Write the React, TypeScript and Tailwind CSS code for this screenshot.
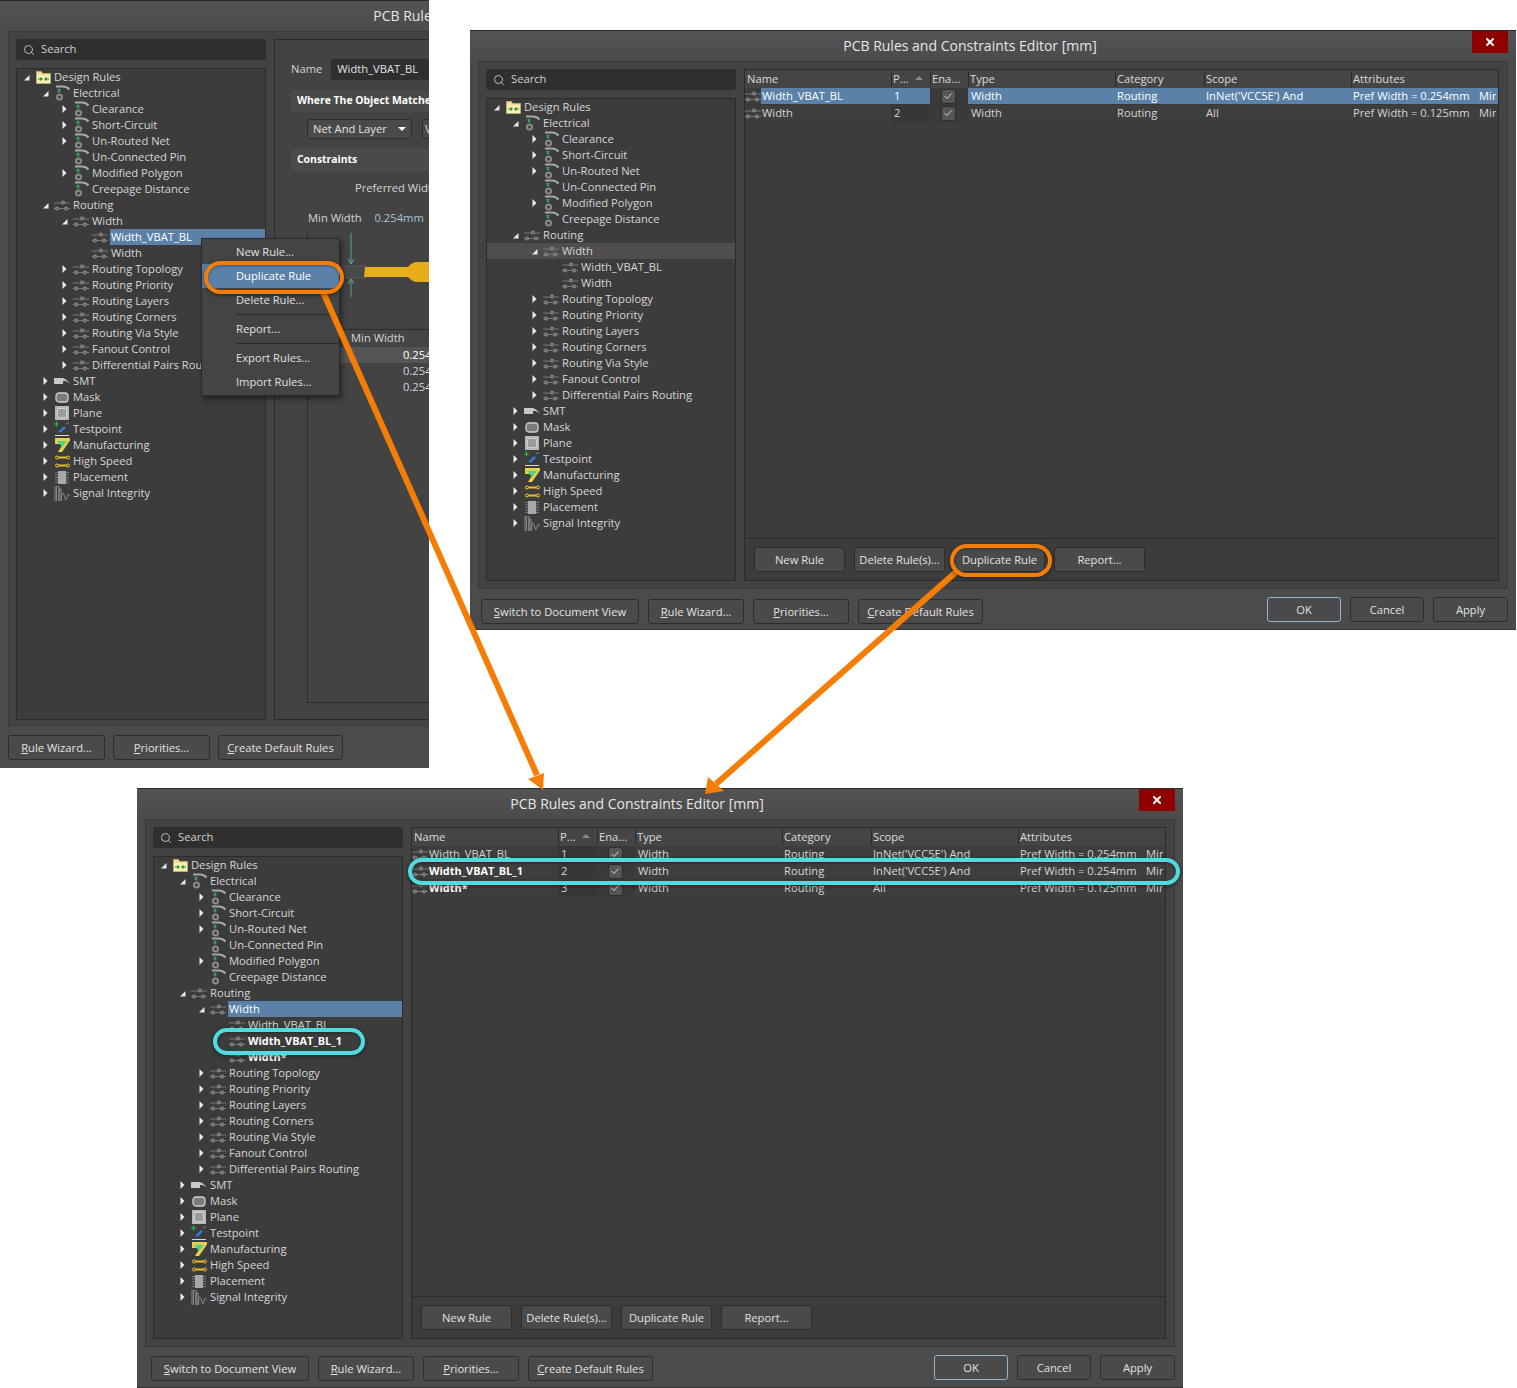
import type { ReactNode } from "react";
import { Search, X } from "lucide-react";

type Kind = "folder" | "elec" | "route" | "smt" | "mask" | "plane" | "test" | "mfg" | "speed" | "place" | "signal";
type Node = { label: string; level: number; kind: Kind; arrow?: "open" | "closed"; selected?: "blue" | "grey"; bold?: boolean };

const TREE_TOP: Node[] = [
  { label: "Design Rules", level: 0, kind: "folder", arrow: "open" },
  { label: "Electrical", level: 1, kind: "elec", arrow: "open" },
  { label: "Clearance", level: 2, kind: "elec", arrow: "closed" },
  { label: "Short-Circuit", level: 2, kind: "elec", arrow: "closed" },
  { label: "Un-Routed Net", level: 2, kind: "elec", arrow: "closed" },
  { label: "Un-Connected Pin", level: 2, kind: "elec" },
  { label: "Modified Polygon", level: 2, kind: "elec", arrow: "closed" },
  { label: "Creepage Distance", level: 2, kind: "elec" },
  { label: "Routing", level: 1, kind: "route", arrow: "open" },
];

const TREE_BOTTOM: Node[] = [
  { label: "Routing Topology", level: 2, kind: "route", arrow: "closed" },
  { label: "Routing Priority", level: 2, kind: "route", arrow: "closed" },
  { label: "Routing Layers", level: 2, kind: "route", arrow: "closed" },
  { label: "Routing Corners", level: 2, kind: "route", arrow: "closed" },
  { label: "Routing Via Style", level: 2, kind: "route", arrow: "closed" },
  { label: "Fanout Control", level: 2, kind: "route", arrow: "closed" },
  { label: "Differential Pairs Routing", level: 2, kind: "route", arrow: "closed" },
  { label: "SMT", level: 1, kind: "smt", arrow: "closed" },
  { label: "Mask", level: 1, kind: "mask", arrow: "closed" },
  { label: "Plane", level: 1, kind: "plane", arrow: "closed" },
  { label: "Testpoint", level: 1, kind: "test", arrow: "closed" },
  { label: "Manufacturing", level: 1, kind: "mfg", arrow: "closed" },
  { label: "High Speed", level: 1, kind: "speed", arrow: "closed" },
  { label: "Placement", level: 1, kind: "place", arrow: "closed" },
  { label: "Signal Integrity", level: 1, kind: "signal", arrow: "closed" },
];

const COLS = "grid grid-cols-[146px_39px_38px_147px_89px_147px_147px]";

function RuleIcon({ kind }: { kind: Kind }) {
  switch (kind) {
    case "folder":
      return (
        <svg width="15" height="13" viewBox="0 0 15 13">
          <path d="M0.500 2.500V0.500h5l1 2h8V12.500H0.500z" fill="#f3df93" stroke="#c9b878" strokeWidth="0.700" />
          <rect x="1" y="4" width="13" height="8" fill="#f9eeb4" />
          <path d="M2 8h4M4.500 6.500 6 8 4.500 9.500M13 8H9M10.500 6.500 9 8l1.500 1.500" stroke="#1f8f2f" strokeWidth="1.200" fill="none" />
        </svg>
      );
    case "elec":
      return (
        <svg width="15" height="16" viewBox="0 0 15 16">
          <path d="M1 1.500H8Q12 1.500 14.500 4.500" stroke="#a8a8a8" strokeWidth="2" fill="none" />
          <path d="M2.500 4l3 3M5.500 4l-3 3M4 3.500v4" stroke="#2fb85a" strokeWidth="1" />
          <circle cx="4.500" cy="12" r="2.500" fill="none" stroke="#8a8a8a" strokeWidth="2" />
        </svg>
      );
    case "route":
      return (
        <svg width="16" height="11" viewBox="0 0 16 11">
          <path d="M0 3h16M0 8.500h16" stroke="#777777" strokeWidth="1" />
          <circle cx="9" cy="2.500" r="2" fill="#8c8c8c" />
          <circle cx="3" cy="8.500" r="2" fill="#8c8c8c" />
          <circle cx="12" cy="8.500" r="2" fill="#8c8c8c" />
          <circle cx="9" cy="2.500" r="0.700" fill="#3c3c3c" />
          <circle cx="3" cy="8.500" r="0.700" fill="#3c3c3c" />
          <circle cx="12" cy="8.500" r="0.700" fill="#3c3c3c" />
        </svg>
      );
    case "smt":
      return (
        <svg width="16" height="8" viewBox="0 0 16 8">
          <path d="M0 1h9l3 1.500 4 4-4.500-2.500H9v3H0z" fill="#c8c8c8" />
        </svg>
      );
    case "mask":
      return (
        <svg width="14" height="11" viewBox="0 0 14 11">
          <rect x="1" y="1" width="12" height="9" rx="3" fill="#7a7a7a" stroke="#d0d0d0" strokeWidth="1.300" />
        </svg>
      );
    case "plane":
      return (
        <svg width="14" height="14" viewBox="0 0 14 14">
          <rect width="14" height="14" fill="#b9b9b9" />
          <rect x="2.500" y="2.500" width="9" height="9" rx="2" fill="#9a9a9a" stroke="#eeeeee" strokeDasharray="1.500 1" />
        </svg>
      );
    case "test":
      return (
        <svg width="16" height="16" viewBox="0 0 16 16">
          <path d="M0 3h5M2.500 0.500v5" stroke="#29c04a" strokeWidth="1.200" />
          <path d="M4 11 10 5l2 1.500-5 5z" fill="#2a7fe0" />
          <path d="M12 3l3-1.500" stroke="#8a8a8a" />
          <path d="M1 14.500h14" stroke="#d8d8d8" />
        </svg>
      );
    case "mfg":
      return (
        <svg width="15" height="14" viewBox="0 0 15 14">
          <path d="M0 0h15v2.500L7 14H3l5-8H0z" fill="#e8cf4a" />
          <path d="M2 3h10L7 9z" fill="#4fd08a" />
        </svg>
      );
    case "speed":
      return (
        <svg width="15" height="13" viewBox="0 0 15 13">
          <rect x="2" y="1.500" width="11" height="2" fill="#e8b92e" />
          <rect x="2" y="9.500" width="11" height="2" fill="#e8b92e" />
          <circle cx="2" cy="2.500" r="1.500" fill="#4a3c10" stroke="#f0c63a" />
          <circle cx="13" cy="2.500" r="1.500" fill="#4a3c10" stroke="#f0c63a" />
          <circle cx="2" cy="10.500" r="1.500" fill="#4a3c10" stroke="#f0c63a" />
          <circle cx="13" cy="10.500" r="1.500" fill="#4a3c10" stroke="#f0c63a" />
        </svg>
      );
    case "place":
      return (
        <svg width="14" height="13" viewBox="0 0 14 13">
          <rect x="3" width="8" height="13" fill="#a8a8a8" />
          <path d="M0 1.500h3M0 4h3M0 6.500h3M0 9h3M0 11.500h3M11 1.500h3M11 4h3M11 6.500h3M11 9h3M11 11.500h3" stroke="#7a7a7a" />
        </svg>
      );
    case "signal":
      return (
        <svg width="16" height="15" viewBox="0 0 16 15">
          <path d="M1 15V0M2.500 15V0H5v15V3h2v12q1-9 2-8t2 5 2-1 3-1" stroke="#9a9a9a" strokeWidth="0.800" fill="none" />
        </svg>
      );
  }
}

function Caret({ open }: { open: boolean }) {
  return open ? (
    <svg width="7" height="7" viewBox="0 0 7 7"><path d="M6.500 1v5.500H1z" fill="#e8e8e8" /></svg>
  ) : (
    <svg width="5" height="8" viewBox="0 0 5 8"><path d="M0.500 0 4.500 4l-4 4z" fill="#e8e8e8" /></svg>
  );
}

function TreeRow({ node }: { node: Node }) {
  const left = 2 + node.level * 19;
  return (
    <div className="relative flex h-[16px] items-center whitespace-nowrap" style={{ paddingLeft: left }}>
      {node.selected === "grey" && <div className="absolute inset-0 bg-[#4e4e4e]" />}
      <div className="relative flex w-[14px] shrink-0 justify-center">
        {node.arrow && <Caret open={node.arrow === "open"} />}
      </div>
      <div className="relative ml-[2px] flex w-[16px] shrink-0 justify-center"><RuleIcon kind={node.kind} /></div>
      <span className={`relative ml-[2px] flex-1 pl-[1px] ${node.selected === "blue" ? "bg-[#5b81a9] text-white" : ""} ${node.bold ? "text-[10.9px] font-bold text-white" : ""}`}>
        {node.label}
      </span>
    </div>
  );
}

function Tree({ middle }: { middle: Node[] }) {
  return (
    <div className="flex-1 overflow-hidden border border-[#2b2b2b] bg-[#3c3c3c] text-[11.2px] text-[#d6d6d6]">
      {[...TREE_TOP, ...middle, ...TREE_BOTTOM].map((n, i) => (
        <TreeRow key={i} node={n} />
      ))}
    </div>
  );
}

function SearchBox() {
  return (
    <div className="flex h-[21px] items-center gap-[6px] rounded-[3px] bg-[#2f2f2f] pl-[7px] text-[11.2px] text-[#d0d0d0]">
      <Search size={12} strokeWidth={2} className="text-[#bdbdbd]" />
      Search
    </div>
  );
}

function Btn({ children, className = "" }: { children: ReactNode; className?: string }) {
  return (
    <div className={`flex h-[25px] shrink-0 items-center justify-center whitespace-nowrap rounded-[3px] border border-[#2c2c2c] bg-[#4a4a4a] pt-[2px] text-[11.2px] text-[#e2e2e2] ${className}`}>
      {children}
    </div>
  );
}

function TitleBar() {
  return (
    <div className="relative flex h-[30px] shrink-0 items-center justify-center bg-gradient-to-b from-[#535353] to-[#4b4b4b] pb-[2px] pr-[46px] text-[14px] text-[#e6e6e6]">
      PCB Rules and Constraints Editor [mm]
      <div className="absolute left-[1002px] top-[0px] flex h-[22px] w-[36px] items-center justify-center bg-[#8f0000] text-white">
        <X size={12} strokeWidth={4} />
      </div>
    </div>
  );
}

function Check() {
  return (
    <div className="flex h-[15px] w-[15px] items-center justify-center rounded-[3px] border border-[#2d2d2d] bg-[#565656]">
      <svg width="8" height="6" viewBox="0 0 8 6"><path d="M0.500 3 3 5.500 7.500 0.500" fill="none" stroke="#e6e6e6" strokeWidth="0.900" /></svg>
    </div>
  );
}

type Rule = { name: string; pr: string; scope: string; pref: string; selected?: boolean; bold?: boolean };

function GridRow({ rule }: { rule: Rule }) {
  const sel = rule.selected ? "bg-[#5b81a9] text-white" : "bg-[#3e3e3e]";
  return (
    <div className={`${COLS} h-[17px] items-stretch whitespace-nowrap border-b border-[#383838] leading-[16px]`}>
      <div className="flex">
        <div className="flex w-[16px] shrink-0 items-center"><RuleIcon kind="route" /></div>
        <span className={`flex-1 pl-[1px] ${sel} ${rule.bold ? "text-[10.9px] font-bold text-white" : ""}`}>{rule.name}</span>
      </div>
      <div className={`pl-[3px] ${rule.selected ? sel : "bg-[#373737]"}`}>{rule.pr}</div>
      <div className="flex items-center justify-center bg-[#3a3a3a] pr-[2px]"><Check /></div>
      <div className={`pl-[3px] ${sel}`}>Width</div>
      <div className={`pl-[2px] ${sel}`}>Routing</div>
      <div className={`pl-[2px] ${sel}`}>{rule.scope}</div>
      <div className={`pl-[2px] ${sel}`}>
        <div className="flex w-[143px] overflow-hidden">
          <span className="w-[126px] shrink-0">Pref Width = {rule.pref}</span>
          <span>Min</span>
        </div>
      </div>
    </div>
  );
}

function RulesGrid({ rules }: { rules: Rule[] }) {
  return (
    <div className="flex w-[755px] flex-col border border-[#2b2b2b] bg-[#3c3c3c] text-[11.2px] text-[#d6d6d6]">
      <div className="flex-1 overflow-hidden">
        <div className={`${COLS} h-[18px] items-center whitespace-nowrap bg-[#454545] text-[#dcdcdc]`}>
          {["Name", "P...", "Ena...", "Type", "Category", "Scope", "Attributes"].map((h, i) => (
            <div key={h} className={`relative ${i > 0 ? "border-l border-[#2b2b2b] pl-[1px]" : "pl-[2px]"}`}>
              {h}
              {i === 1 && <span className="absolute right-[7px] top-[5px] h-0 w-0 border-x-[4px] border-b-[4px] border-x-transparent border-b-[#8a8a8a]" />}
            </div>
          ))}
        </div>
        {rules.map((r) => (
          <GridRow key={r.name + r.pr} rule={r} />
        ))}
      </div>
      <div className="flex h-[42px] shrink-0 items-start gap-[9px] border-t border-[#2b2b2b] pl-[9px] pt-[8px]">
        <Btn className="w-[91px]">New Rule</Btn>
        <Btn className="w-[91px]">Delete Rule(s)...</Btn>
        <Btn className="w-[91px]">Duplicate Rule</Btn>
        <Btn className="w-[91px]">Report...</Btn>
      </div>
    </div>
  );
}

function U({ children }: { children: string }) {
  return <span className="underline">{children}</span>;
}

function Editor({ middle, rules, className, footer }: { middle: Node[]; rules: Rule[]; className: string; footer: string }) {
  return (
    <div className={`absolute flex h-[600px] w-[1046px] flex-col border-t border-[#2a2a2a] bg-[#4b4b4b] shadow-[inset_0_-1px_0_#333] ${className}`}>
      <TitleBar />
      <div className="mx-[8px] flex h-[528px] shrink-0 gap-[8px] border border-[#393939] bg-[#434343] p-[7px]">
        <div className="flex w-[250px] shrink-0 flex-col gap-[8px]">
          <SearchBox />
          <Tree middle={middle} />
        </div>
        <RulesGrid rules={rules} />
      </div>
      <div className={`relative flex items-start gap-[9px] ${footer}`}>
        <Btn className="w-[158px]"><U>S</U>witch to Document View</Btn>
        <Btn className="w-[96px]"><U>R</U>ule Wizard...</Btn>
        <Btn className="w-[96px]"><U>P</U>riorities...</Btn>
        <Btn className="w-[125px]"><U>C</U>reate Default Rules</Btn>
        <div className="absolute right-[8px] top-[8px] flex gap-[9px]">
          <Btn className="w-[74px] border-[#8fb4d4]">OK</Btn>
          <Btn className="w-[74px]">Cancel</Btn>
          <Btn className="w-[75px]">Apply</Btn>
        </div>
      </div>
    </div>
  );
}

function MenuItem({ children, active }: { children: string; active?: boolean }) {
  return (
    <div className={`flex h-[24px] items-center pl-[34px] ${active ? "bg-[#5b81a9] text-white" : ""}`}>{children}</div>
  );
}

function ContextMenu() {
  return (
    <div className="absolute left-[201px] top-[237px] w-[139px] border border-[#2a2a2a] bg-[#444444] py-[1px] text-[11.2px] text-[#e0e0e0] shadow-[2px_3px_5px_rgba(0,0,0,0.45)]">
      <MenuItem>New Rule...</MenuItem>
      <MenuItem active>Duplicate Rule</MenuItem>
      <MenuItem>Delete Rule...</MenuItem>
      <div className="my-[2px] ml-[34px] border-t border-[#2a2a2a]" />
      <MenuItem>Report...</MenuItem>
      <div className="my-[2px] ml-[34px] border-t border-[#2a2a2a]" />
      <MenuItem>Export Rules...</MenuItem>
      <MenuItem>Import Rules...</MenuItem>
    </div>
  );
}

function WidthDiagram() {
  return (
    <svg width="122" height="70" viewBox="0 0 122 70" className="ml-[32px] mt-[5px] block">
      <path d="M11 1v31M8 27l3 5 3-5M11 65V47M8 52l3-5 3 5" fill="none" stroke="#5fae9a" strokeWidth="0.900" />
      <rect y="34" width="26" height="12" fill="#4a4a4a" stroke="#666666" strokeWidth="0.600" />
      <path d="M25 35h43q4-5 10-5h44v20H78q-6 0-10-5H24z" fill="#e6ae1c" />
    </svg>
  );
}

function LeftEditor() {
  return (
    <div className="absolute left-0 top-0 flex h-[768px] w-[429px] flex-col overflow-hidden border-t border-[#2a2a2a] bg-[#4b4b4b]">
      <div className="w-[1046px] shrink-0"><TitleBar /></div>
      <div className="ml-[8px] flex h-[696px] w-[1030px] shrink-0 gap-[8px] border-l border-t border-[#393939] bg-[#434343] p-[7px]">
        <div className="flex w-[250px] shrink-0 flex-col gap-[8px]">
          <SearchBox />
          <Tree
            middle={[
              { label: "Width", level: 2, kind: "route", arrow: "open" },
              { label: "Width_VBAT_BL", level: 3, kind: "route", selected: "blue" },
              { label: "Width", level: 3, kind: "route" },
            ]}
          />
        </div>
        <div className="w-[400px] border border-[#2b2b2b] bg-[#434343] pl-[16px] text-[11.2px] text-[#d6d6d6]">
          <div className="mt-[19px] flex h-[21px] items-center gap-[9px] whitespace-nowrap">
            <span>Name</span>
            <div className="flex h-[21px] w-[300px] items-center rounded-[3px] bg-[#2f2f2f] pl-[6px] text-[#e2e2e2]">Width_VBAT_BL</div>
          </div>
          <div className="mt-[10px] flex h-[22px] items-center whitespace-nowrap bg-[#4a4a4a] pl-[6px] text-[10.4px] font-bold text-white">Where The Object Matches</div>
          <div className="mt-[7px] flex gap-[10px] pl-[16px]">
            <div className="flex h-[20px] w-[105px] items-center justify-between rounded-[3px] border border-[#2c2c2c] bg-[#4a4a4a] px-[5px] text-[#e2e2e2]">
              Net And Layer
              <span className="h-0 w-0 border-x-[4px] border-t-[4px] border-x-transparent border-t-white" />
            </div>
            <div className="flex h-[20px] w-[100px] items-center rounded-[3px] border border-[#2c2c2c] bg-[#4a4a4a] pl-[2px]">V</div>
          </div>
          <div className="mt-[10px] flex h-[22px] items-center bg-[#4a4a4a] pl-[6px] text-[10.4px] font-bold text-white">Constraints</div>
          <div className="mt-[9px] whitespace-nowrap pl-[64px]">Preferred Width</div>
          <div className="mt-[13px] flex gap-[13px] whitespace-nowrap pl-[17px]">
            <span>Min Width</span>
            <span className="text-[#a9c3d8]">0.254mm</span>
          </div>
          <div className="ml-[16px] mt-[1px] h-[471px] border-b border-l border-[#2b2b2b]">
            <WidthDiagram />
            <div className="ml-[32px] mt-[27px] h-[17px] whitespace-nowrap border-t border-[#2b2b2b] bg-[#454545] pl-[11px] leading-[16px]">Min Width</div>
            <div className="ml-[32px] mt-[1px] h-[16px] bg-[#555555] pl-[63px] leading-[16px] text-white">0.254mm</div>
            <div className="ml-[32px] h-[16px] pl-[63px] leading-[16px]">0.254mm</div>
            <div className="ml-[32px] h-[16px] pl-[63px] leading-[16px]">0.254mm</div>
          </div>
        </div>
      </div>
      <div className="flex gap-[8px] pl-[8px] pt-[8px]">
        <Btn className="w-[97px]"><U>R</U>ule Wizard...</Btn>
        <Btn className="w-[97px]"><U>P</U>riorities...</Btn>
        <Btn className="w-[125px]"><U>C</U>reate Default Rules</Btn>
      </div>
      <ContextMenu />
    </div>
  );
}

function Ring({ className }: { className: string }) {
  return <div className={`absolute rounded-full border-[4px] shadow-[0_1px_4px_rgba(0,0,0,0.5),inset_0_1px_3px_rgba(0,0,0,0.35)] ${className}`} />;
}

function Arrows() {
  return (
    <svg width="1517" height="1388" viewBox="0 0 1517 1388" className="pointer-events-none absolute left-0 top-0">
      <path d="M323 292 537 775" stroke="#f47d07" strokeWidth="6" fill="none" />
      <path d="M543 790 528 779 544 773z" fill="#f47d07" />
      <path d="M956 572 716 784" stroke="#f47d07" strokeWidth="6" fill="none" />
      <path d="M705 794 708 777 724 791z" fill="#f47d07" />
    </svg>
  );
}

export default function App() {
  return (
    <div className="relative h-[1388px] w-[1517px] overflow-hidden bg-white font-['Open_Sans',sans-serif]">
      <LeftEditor />
      <Editor
        className="left-[470px] top-[30px]"
        footer="pl-[11px] pt-[10px]"
        middle={[
          { label: "Width", level: 2, kind: "route", arrow: "open", selected: "grey" },
          { label: "Width_VBAT_BL", level: 3, kind: "route" },
          { label: "Width", level: 3, kind: "route" },
        ]}
        rules={[
          { name: "Width_VBAT_BL", pr: "1", scope: "InNet('VCC5E') And", pref: "0.254mm", selected: true },
          { name: "Width", pr: "2", scope: "All", pref: "0.125mm" },
        ]}
      />
      <Editor
        className="left-[137px] top-[788px]"
        footer="pl-[14px] pt-[9px]"
        middle={[
          { label: "Width", level: 2, kind: "route", arrow: "open", selected: "blue" },
          { label: "Width_VBAT_BL", level: 3, kind: "route" },
          { label: "Width_VBAT_BL_1", level: 3, kind: "route", bold: true },
          { label: "Width*", level: 3, kind: "route", bold: true },
        ]}
        rules={[
          { name: "Width_VBAT_BL", pr: "1", scope: "InNet('VCC5E') And", pref: "0.254mm" },
          { name: "Width_VBAT_BL_1", pr: "2", scope: "InNet('VCC5E') And", pref: "0.254mm", bold: true },
          { name: "Width*", pr: "3", scope: "All", pref: "0.125mm", bold: true },
        ]}
      />
      <Arrows />
      <Ring className="left-[204px] top-[261px] h-[33px] w-[140px] border-[#f47d07]" />
      <Ring className="left-[950px] top-[544px] h-[33px] w-[102px] border-[#f47d07]" />
      <Ring className="left-[213px] top-[1028px] h-[27px] w-[152px] border-[#4fdbe0]" />
      <Ring className="left-[408px] top-[858px] h-[27px] w-[772px] border-[#4fdbe0]" />
    </div>
  );
}
